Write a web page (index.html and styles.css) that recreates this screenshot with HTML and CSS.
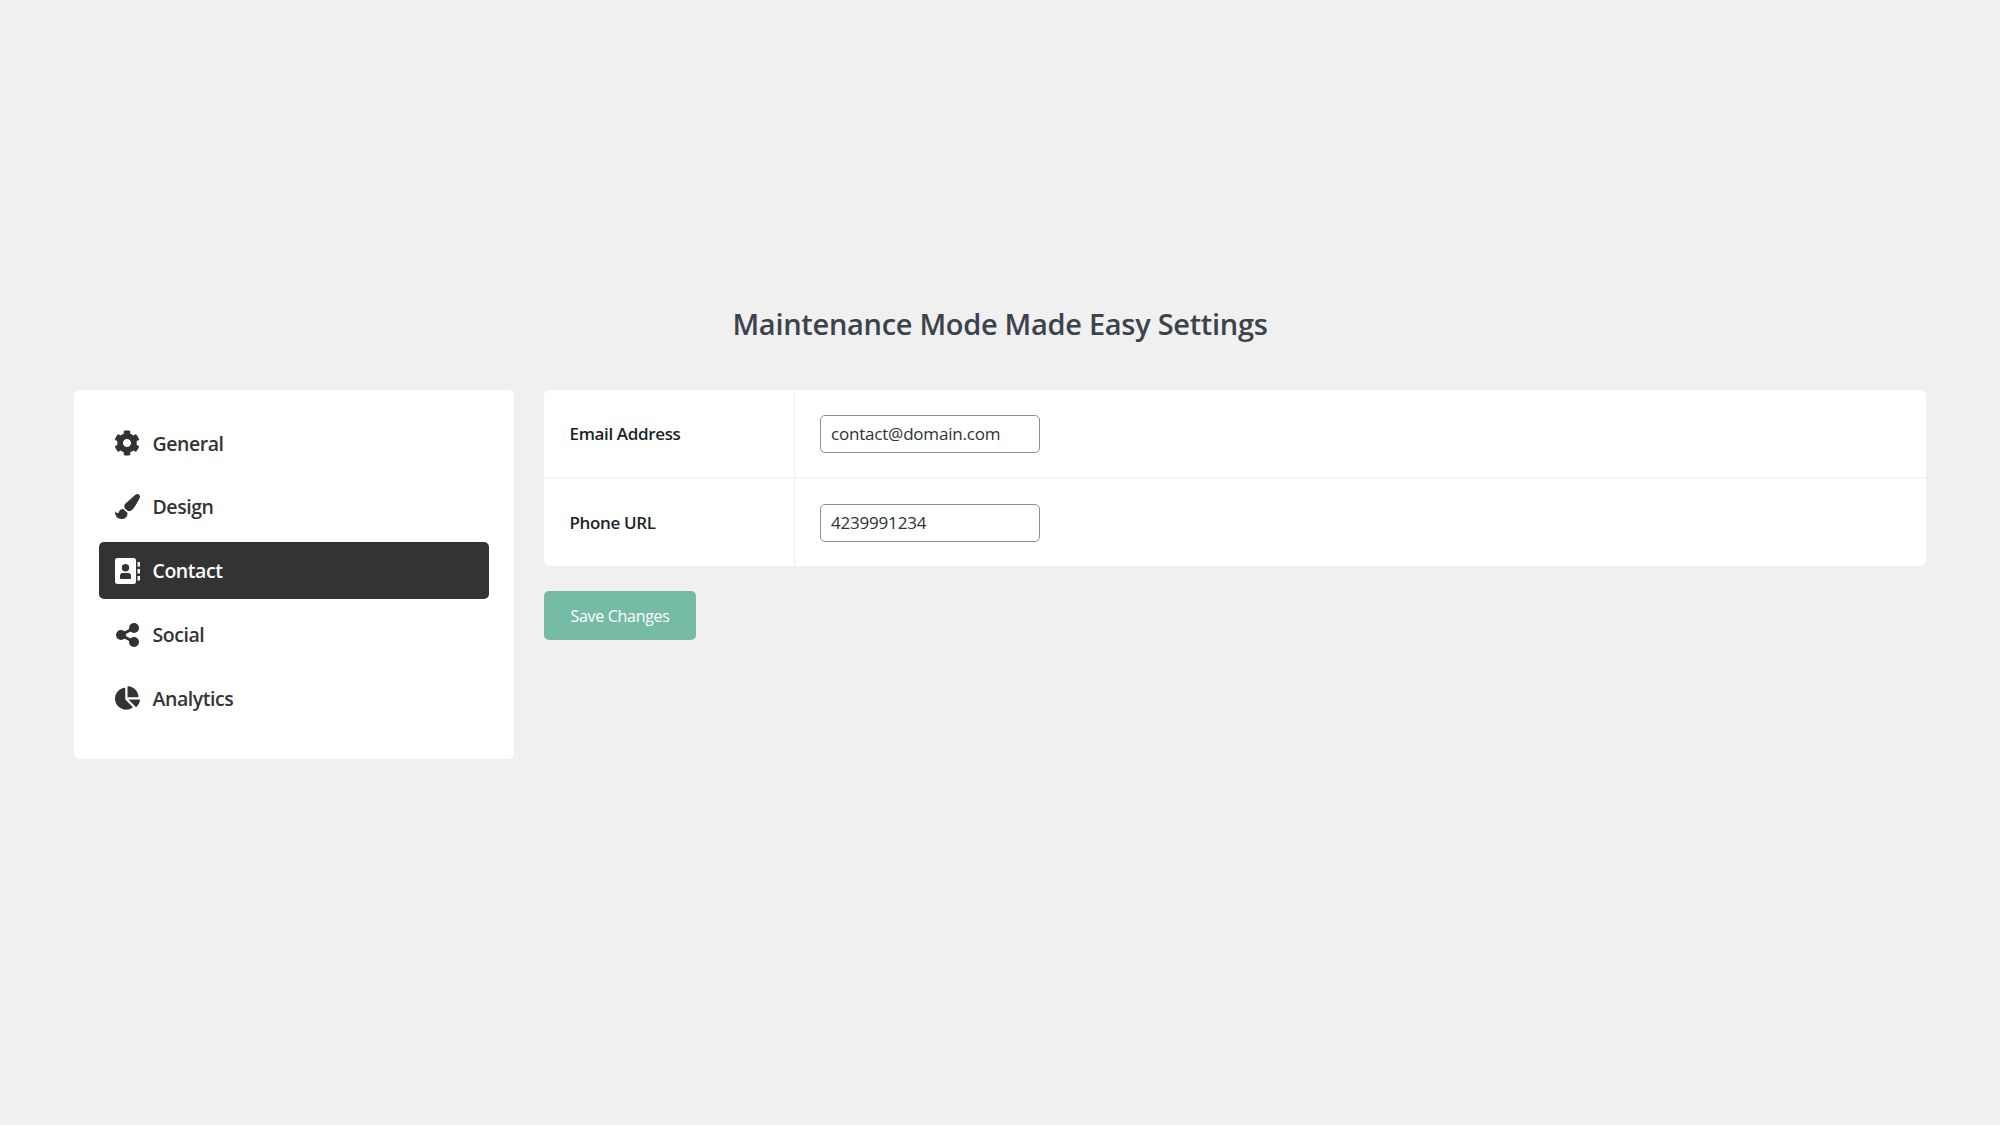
FILE: index.html
```html
<!DOCTYPE html>
<html lang="en">
<head>
<meta charset="utf-8">
<title>Maintenance Mode Made Easy Settings</title>
<link rel="stylesheet" href="styles.css">
</head>
<body>
<h1 class="title">Maintenance Mode Made Easy Settings</h1>
<div class="layout">
  <nav class="sidebar">
    <a class="nav-item"><span class="nav-icon"><svg class="icon-gear" viewBox="0 0 512 512"><path d="M487.4 315.7l-42.6-24.6c4.3-23.2 4.3-47 0-70.2l42.6-24.6c4.9-2.8 7.1-8.6 5.5-14-11.1-35.6-30-67.8-54.7-94.6-3.8-4.1-10-5.1-14.8-2.3L380.8 110c-17.9-15.4-38.5-27.3-60.8-35.1V25.8c0-5.6-3.9-10.5-9.4-11.7-36.7-8.2-74.3-7.8-109.2 0-5.5 1.2-9.4 6.1-9.4 11.7V75c-22.2 7.9-42.8 19.8-60.8 35.1L88.7 85.5c-4.9-2.8-11-1.9-14.8 2.3-24.7 26.7-43.6 58.9-54.7 94.6-1.7 5.4.6 11.2 5.5 14L67.3 221c-4.3 23.2-4.3 47 0 70.2l-42.6 24.6c-4.9 2.8-7.1 8.6-5.5 14 11.1 35.6 30 67.8 54.7 94.6 3.8 4.1 10 5.1 14.8 2.3l42.6-24.6c17.9 15.4 38.5 27.3 60.8 35.1v49.2c0 5.6 3.9 10.5 9.4 11.7 36.7 8.2 74.3 7.8 109.2 0 5.5-1.2 9.4-6.1 9.4-11.7v-49.2c22.2-7.9 42.8-19.8 60.8-35.1l42.6 24.6c4.9 2.8 11 1.9 14.8-2.3 24.7-26.7 43.6-58.9 54.7-94.6 1.5-5.5-.7-11.3-5.6-14.1zM256 336c-44.1 0-80-35.9-80-80s35.9-80 80-80 80 35.9 80 80-35.9 80-80 80z"/></svg></span>General</a>
    <a class="nav-item"><span class="nav-icon"><svg class="icon-brush" viewBox="0 0 512 512"><path d="M167.02 309.34c-40.12 2.58-76.53 17.86-97.19 72.3-2.35 6.21-8 9.98-14.59 9.98-11.11 0-45.46-27.67-55.25-34.35C0 439.62 37.93 512 128 512c75.86 0 128-43.77 128-120.19 0-3.11-.65-6.08-.97-9.13l-88.01-73.34zM457.89 0c-15.16 0-29.37 6.71-40.21 16.45C213.27 199.05 192 203.34 192 257.09c0 13.7 3.25 26.76 8.73 38.7l63.82 53.18c7.21 1.8 14.64 3.03 22.39 3.03 62.11 0 98.11-45.47 211.16-256.46 7.38-14.35 13.9-29.85 13.9-45.99C512 20.64 486 0 457.89 0z"/></svg></span>Design</a>
    <a class="nav-item active"><span class="nav-icon"><svg class="icon-contact" viewBox="0 0 25 26"><path fill-rule="evenodd" d="M2.5 0h16A2.5 2.5 0 0 1 21 2.500v21a2.500 2.500 0 0 1-2.500 2.500h-16A2.500 2.500 0 0 1 0 23.500v-21A2.500 2.500 0 0 1 2.500 0zM10.500 6a3.700 3.700 0 1 0 0 7.400 3.700 3.700 0 0 0 0-7.400zM7.500 15C6 15 5 16.300 5 17.700V20a1 1 0 0 0 1 1h9a1 1 0 0 0 1-1v-2.300C16 16.300 15 15 13.500 15z"/><rect x="22.500" y="4" width="2.500" height="4.500"/><rect x="22.500" y="11" width="2.500" height="4.500"/><rect x="22.500" y="18" width="2.500" height="4.500"/></svg></span>Contact</a>
    <a class="nav-item"><span class="nav-icon"><svg class="icon-social" viewBox="0 0 23 24"><circle cx="5" cy="12" r="5"/><circle cx="18" cy="5" r="5"/><circle cx="18" cy="19" r="5"/><polyline class="share-line" points="18,5 5,12 18,19"/></svg></span>Social</a>
    <a class="nav-item"><span class="nav-icon"><svg class="icon-pie" viewBox="0 0 544 512"><path d="M527.79 288H290.5l158.03 158.03c6.04 6.04 15.98 6.53 22.19.68 38.7-36.46 65.32-85.61 73.13-140.86 1.34-9.46-6.51-17.85-16.06-17.85zm-15.83-64.8C503.72 103.74 408.26 8.28 288.8.04 279.68-.59 272 7.1 272 16.24V240h223.77c9.14 0 16.82-7.68 16.19-16.8zM224 288V50.71c0-9.55-8.39-17.4-17.84-16.06C86.99 51.49-4.1 155.6.14 280.37 4.5 408.51 114.83 513.59 243.03 511.98c50.4-.63 96.97-16.87 135.26-44.03 7.9-5.6 8.42-17.23 1.57-24.08L224 288z"/></svg></span>Analytics</a>
  </nav>
  <main class="content">
    <div class="card">
      <div class="row">
        <label class="row-label">Email Address</label>
        <div class="row-field"><input class="text-input" type="text" value="contact@domain.com"></div>
      </div>
      <div class="row">
        <label class="row-label">Phone URL</label>
        <div class="row-field"><input class="text-input" type="text" value="4239991234"></div>
      </div>
    </div>
    <button class="save-btn" type="button">Save Changes</button>
  </main>
</div>
</body>
</html>
```
FILE: styles.css
```css
* { box-sizing: border-box; }
html, body { margin: 0; padding: 0; }
body {
  height: 1125px;
  background: #f0f0f0;
  color: #333;
  font-family: "Open Sans", "Noto Sans", sans-serif;
  overflow: hidden;
}
.title {
  margin: 0;
  padding-top: 301.500px;
  height: 390px;
  text-align: center;
  font-size: 29px;
  line-height: 44px;
  font-weight: 600;
  color: #3c434a;
  letter-spacing: -0.3px;
}
.layout {
  display: flex;
  align-items: flex-start;
  gap: 30px;
  padding: 0 74px;
}
.sidebar {
  width: 440px;
  height: 369px;
  padding: 24.700px 25px 0;
  background: #fff;
  border-radius: 6px;
  display: flex;
  flex-direction: column;
  gap: 6.800px;
}
.nav-item {
  display: flex;
  align-items: center;
  height: 57px;
  padding-left: 15px;
  border-radius: 5px;
  font-size: 19.500px;
  font-weight: 600;
  color: #333;
  letter-spacing: -0.450px;
}
.nav-item.active {
  background: #333;
  color: #fff;
}
.nav-icon {
  width: 26px;
  height: 27px;
  margin-right: 12.500px;
  display: flex;
  align-items: center;
  justify-content: center;
  flex: none;
}
.nav-icon svg { display: block; fill: #333; }
.active .nav-icon svg { fill: #fff; }
.share-line { fill: none; stroke: #333; stroke-width: 3; }
.icon-gear { width: 26px; height: 26px; }
.icon-brush { width: 25px; height: 25px; }
.icon-contact { width: 25px; height: 26px; }
.icon-social { width: 23px; height: 24px; }
.icon-pie { width: 25px; height: 24px; }
.content { flex: 1; min-width: 0; }
.card {
  background: #fff;
  border-radius: 6px;
  height: 176px;
  display: flex;
  flex-direction: column;
}
.row { display: flex; flex: 1; }
.row + .row { border-top: 2px solid #f6f6f6; }
.row-label {
  width: 251px;
  padding-left: 25.500px;
  display: flex;
  align-items: center;
  border-right: 1px solid #f0f0f0;
  font-size: 17px;
  font-weight: 600;
  color: #1d2327;
  letter-spacing: -0.350px;
}
.row-field {
  flex: 1;
  display: flex;
  align-items: center;
  padding-left: 25px;
}
.text-input {
  width: 220px;
  height: 38px;
  padding: 0 10px;
  border: 1px solid #8c8f94;
  border-radius: 5px;
  background: #fff;
  color: #2c3338;
  font: 400 17px "Open Sans", "Noto Sans", sans-serif;
  letter-spacing: -0.200px;
}
.save-btn {
  display: block;
  margin-top: 25px;
  width: 152px;
  height: 49px;
  padding: 0;
  border: 0;
  border-radius: 5px;
  background: #76bba5;
  color: #fff;
  font: 400 16px "Open Sans", "Noto Sans", sans-serif;
  letter-spacing: -0.300px;
}
```
